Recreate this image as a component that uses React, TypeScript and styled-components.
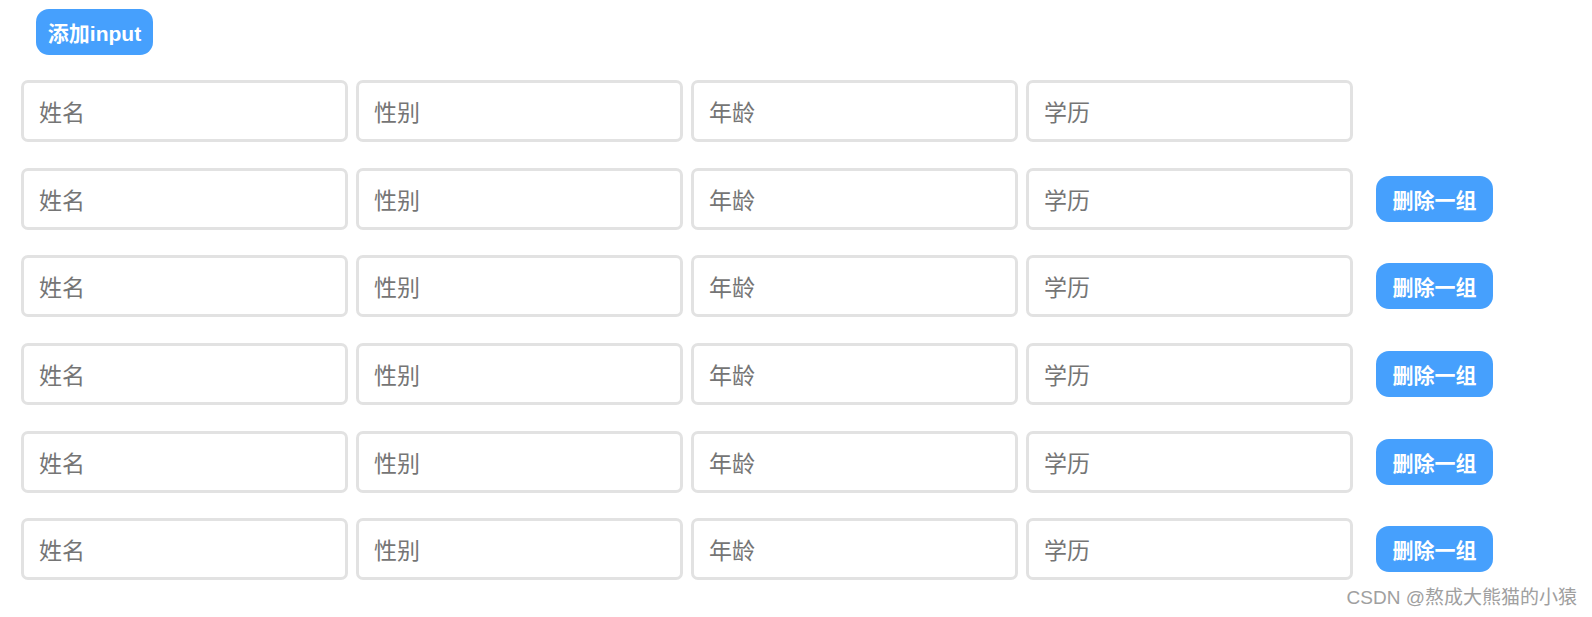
import React from "react";
import styled, { createGlobalStyle } from "styled-components";

const GlobalStyle = createGlobalStyle`
  html, body {
    margin: 0;
    padding: 0;
    background: #ffffff;
  }
  body {
    font-family: "Liberation Sans", "Noto Sans CJK SC", sans-serif;
  }
  * { box-sizing: border-box; }
`;

const Page = styled.div`
  position: relative;
  min-height: 100vh;
  padding: 9px 0 0 21px;
  display: flex;
  flex-direction: column;
  align-items: flex-start;
`;

const BlueButton = styled.button<{ $indent?: number }>`
  width: 117px;
  height: 46px;
  margin-left: ${(p) => p.$indent ?? 0}px;
  border: none;
  border-radius: 13px;
  background: #46a0fd;
  color: #ffffff;
  font-family: "Liberation Sans", "Noto Sans CJK SC", sans-serif;
  font-weight: 700;
  font-size: 21px;
  display: flex;
  align-items: center;
  justify-content: center;
  padding: 0;
  cursor: pointer;
`;

const Rows = styled.div`
  margin-top: 25px;
  display: flex;
  flex-direction: column;
  gap: 25.7px;
`;

const Row = styled.div`
  display: flex;
  align-items: center;
  gap: 8px;
`;

const Field = styled.input`
  width: 327px;
  height: 62px;
  border: 3px solid #e2e2e2;
  border-radius: 7px;
  padding: 0 0 0 15px;
  font-family: "Noto Sans CJK SC", sans-serif;
  font-size: 23px;
  color: #333;
  outline: none;
  background: #fff;
  &::placeholder {
    color: #757575;
  }
`;

const DeleteSlot = styled.div`
  margin-left: 15px;
`;

const Watermark = styled.div`
  position: absolute;
  right: 15px;
  bottom: 8px;
  font-family: "Liberation Sans", "Noto Sans CJK SC", sans-serif;
  font-size: 19px;
  color: #a0a0a0;
  white-space: nowrap;
`;

const fields = ["姓名", "性别", "年龄", "学历"];

export default function App() {
  const rows = [0, 1, 2, 3, 4, 5];
  return (
    <>
      <GlobalStyle />
      <Page>
        <BlueButton $indent={15}>添加input</BlueButton>
        <Rows>
          {rows.map((r) => (
            <Row key={r}>
              {fields.map((f) => (
                <Field key={f} placeholder={f} />
              ))}
              {r > 0 && (
                <DeleteSlot>
                  <BlueButton>删除一组</BlueButton>
                </DeleteSlot>
              )}
            </Row>
          ))}
        </Rows>
        <Watermark>CSDN @熬成大熊猫的小猿</Watermark>
      </Page>
    </>
  );
}
